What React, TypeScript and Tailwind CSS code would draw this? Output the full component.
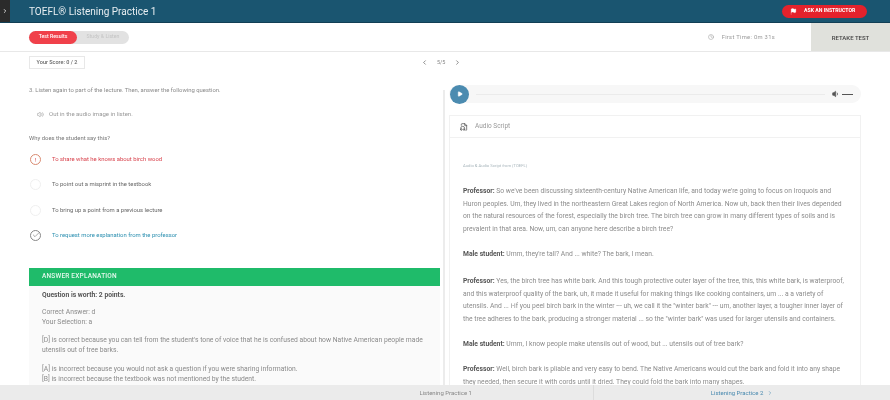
import { ChevronLeft, ChevronRight, Clock, Flag, Play, Volume1, Volume2, FileAudio, Check } from "lucide-react";

const options = [
  { text: "To share what he knows about birch wood", tone: "text-[#d8424c]", mark: "wrong" },
  { text: "To point out a misprint in the textbook", tone: "text-[#666666]", mark: "none" },
  { text: "To bring up a point from a previous lecture", tone: "text-[#666666]", mark: "none" },
  { text: "To request more explanation from the professor", tone: "text-[#2b8fb0]", mark: "right" },
];

function OptionMark({ mark }: { mark: string }) {
  if (mark === "wrong") {
    return (
      <span className="flex h-[11px] w-[11px] items-center justify-center rounded-full border border-[#d98a70] text-[6px] leading-none text-[#d8424c]">
        !
      </span>
    );
  }
  if (mark === "right") {
    return (
      <span className="flex h-[11px] w-[11px] items-center justify-center rounded-full border border-[#888888] text-[#555555]">
        <Check size={8} strokeWidth={1.5} />
      </span>
    );
  }
  return <span className="h-[11px] w-[11px] rounded-full border border-[#f0f0f0]" />;
}

export default function App() {
  return (
    <div className="flex h-[400px] w-[890px] flex-col overflow-hidden bg-white font-['Roboto',sans-serif] text-[#666666] blur-[0.5px]">
      <header className="flex h-[23px] shrink-0 items-center justify-between border-b border-[#123f55] bg-[#1a5570] pr-[23px]">
        <div className="flex h-full items-center">
          <span className="flex h-full w-[10px] items-center justify-center bg-[#2b2b2b] text-white">
            <ChevronRight size={6} strokeWidth={3} />
          </span>
          <h1 className="ml-[19px] text-[10px] text-[#e8eef1]">TOEFL® Listening Practice 1</h1>
        </div>
        <button className="flex h-[13px] w-[85px] items-center gap-[7px] rounded-full bg-[#e4222c] pl-[8px] text-[5.2px] font-bold whitespace-nowrap text-white">
          <Flag size={7} fill="white" strokeWidth={1} />
          ASK AN INSTRUCTOR
        </button>
      </header>

      <div className="flex h-[29px] shrink-0 items-center justify-between border-b border-[#e8e8e8] pl-[29px]">
        <div className="flex h-[13px] w-[100px] rounded-full bg-[#e2e2e2] text-[5.2px]">
          <span className="flex w-[48px] items-center justify-center rounded-full bg-[#f0414a] font-medium text-white">Test Results</span>
          <span className="flex flex-1 items-center justify-center text-[#c4c4c4]">Study & Listen</span>
        </div>
        <div className="flex h-full items-center">
          <div className="mr-[36px] flex items-center gap-[8px] text-[5.8px] tracking-[0.3px] text-[#999999]">
            <Clock size={6} />
            First Time: 0m 31s
          </div>
          <button className="flex h-full w-[79px] items-center justify-center bg-[#e0e1dc] text-[6px] font-medium text-[#444444]">
            RETAKE TEST
          </button>
        </div>
      </div>

      <main className="flex min-h-0 flex-1 flex-col">
        <div className="flex h-[28px] shrink-0 items-start pt-[4px] pl-[29px]">
          <span className="flex h-[13px] w-[56px] items-center justify-center border border-[#e8e8e8] text-[5.5px] font-medium text-[#666666]">
            Your Score: 0 / 2
          </span>
          <div className="ml-[336px] flex h-[13px] items-center gap-[9px] text-[5.5px] text-[#888888]">
            <ChevronLeft size={7} className="text-[#444444]" />
            5/5
            <ChevronRight size={7} className="text-[#444444]" />
          </div>
        </div>

        <div className="flex min-h-0 flex-1">
          <section className="w-[443px] shrink-0 overflow-hidden pt-[6px] pl-[29px]">
            <p className="text-[5.9px] leading-[8px] text-[#8a8a8a]">
              3. Listen again to part of the lecture. Then, answer the following question.
            </p>
            <div className="mt-[16px] ml-[8px] flex items-center gap-[5px] text-[6px] leading-[8px] text-[#999999]">
              <Volume2 size={7} />
              Out in the audio image in listen.
            </div>
            <p className="mt-[16px] text-[5.9px] leading-[8px] text-[#777777]">Why does the student say this?</p>
            <ul className="mt-[12px] ml-px flex flex-col gap-[14.3px]">
              {options.map((o) => (
                <li key={o.text} className={`flex h-[11px] items-center gap-[11px] text-[5.9px] ${o.tone}`}>
                  <OptionMark mark={o.mark} />
                  {o.text}
                </li>
              ))}
            </ul>
            <div className="mt-[27px] w-[411px] bg-[#fafafa]">
              <h2 className="flex h-[18px] items-center bg-[#1fbb6a] pl-[13px] text-[6.5px] font-medium tracking-[0.2px] text-[#e6f8ee]">
                ANSWER EXPLANATION
              </h2>
              <div className="px-[13px] pt-[4px] pb-[20px] text-[6.75px] leading-[10px] text-[#8a8a8a]">
                <p className="font-bold text-[#555555]">Question is worth: 2 points.</p>
                <p className="mt-[7px]">
                  Correct Answer: d
                  <br />
                  Your Selection: a
                </p>
                <p className="mt-[8px]">
                  [D] is correct because you can tell from the student's tone of voice that he is confused about how Native American people made
                  <br />
                  utensils out of tree barks.
                </p>
                <p className="mt-[9px]">
                  [A] is incorrect because you would not ask a question if you were sharing information.
                  <br />
                  [B] is incorrect because the textbook was not mentioned by the student.
                </p>
              </div>
            </div>
          </section>

          <section className="flex min-w-0 flex-1 gap-[4px] overflow-hidden pt-[5px]">
            <div className="mt-[5px] h-full w-[2px] shrink-0 bg-[#ececec]" />
            <div className="w-[412px] shrink-0">
              <div className="flex h-[18px] items-center rounded-full bg-[#f7f7f7] pr-[8px]">
                <span className="ml-px flex h-[19px] w-[19px] items-center justify-center rounded-full bg-[#4b8bb0] text-white">
                  <Play size={6} fill="white" />
                </span>
                <span className="mx-[7px] h-px flex-1 bg-[#ebebeb]" />
                <Volume1 size={8} fill="#555555" className="text-[#555555]" />
                <span className="ml-[2px] h-px w-[11px] bg-[#555555]" />
              </div>
              <div className="mt-[12px] border border-[#f1f1f1]">
                <div className="flex h-[22px] items-center gap-[7px] border-b border-[#f1f1f1] pl-[10px] text-[6.5px] text-[#999999]">
                  <FileAudio size={8} className="text-[#444444]" />
                  Audio Script
                </div>
                <div className="px-[13px] pt-[22px] text-[6.75px] leading-[12.4px] text-[#8c8c8c]">
                  <p className="text-[4.2px] text-[#a9b6bc]">Audio & Audio Script from (TOEFL)</p>
                  <p className="mt-[13px]">
                    <b className="text-[#555555]">Professor:</b> So we've been discussing sixteenth-century Native American life, and today we're going to focus on Iroquois and
                    <br />
                    Huron peoples. Um, they lived in the northeastern Great Lakes region of North America. Now uh, back then their lives depended
                    <br />
                    on the natural resources of the forest, especially the birch tree. The birch tree can grow in many different types of soils and is
                    <br />
                    prevalent in that area. Now, um, can anyone here describe a birch tree?
                  </p>
                  <p className="mt-[13px]">
                    <b className="text-[#555555]">Male student:</b> Umm, they're tall? And ... white? The bark, I mean.
                  </p>
                  <p className="mt-[15px]">
                    <b className="text-[#555555]">Professor:</b> Yes, the birch tree has white bark. And this tough protective outer layer of the tree, this, this white bark, is waterproof,
                    <br />
                    and this waterproof quality of the bark, uh, it made it useful for making things like cooking containers, um ... a a variety of
                    <br />
                    utensils. And ... i-if you peel birch bark in the winter --- uh, we call it the "winter bark" --- um, another layer, a tougher inner layer of
                    <br />
                    the tree adheres to the bark, producing a stronger material ... so the "winter bark" was used for larger utensils and containers.
                  </p>
                  <p className="mt-[13px]">
                    <b className="text-[#555555]">Male student:</b> Umm, I know people make utensils out of wood, but ... utensils out of tree bark?
                  </p>
                  <p className="mt-[13px]">
                    <b className="text-[#555555]">Professor:</b> Well, birch bark is pliable and very easy to bend. The Native Americans would cut the bark and fold it into any shape
                    <br />
                    they needed, then secure it with cords until it dried. They could fold the bark into many shapes.
                  </p>
                </div>
              </div>
            </div>
          </section>
        </div>
      </main>

      <footer className="z-10 flex h-[15px] shrink-0 bg-[#ebebeb] text-[6px]">
        <div className="flex w-[593px] items-center justify-end pr-[121px] text-[#888888]">Listening Practice 1</div>
        <div className="flex flex-1 items-center justify-center gap-[4px] border-l border-[#dcdcdc] text-[#4b8bb0]">
          Listening Practice 2
          <ChevronRight size={6} />
        </div>
      </footer>
    </div>
  );
}
